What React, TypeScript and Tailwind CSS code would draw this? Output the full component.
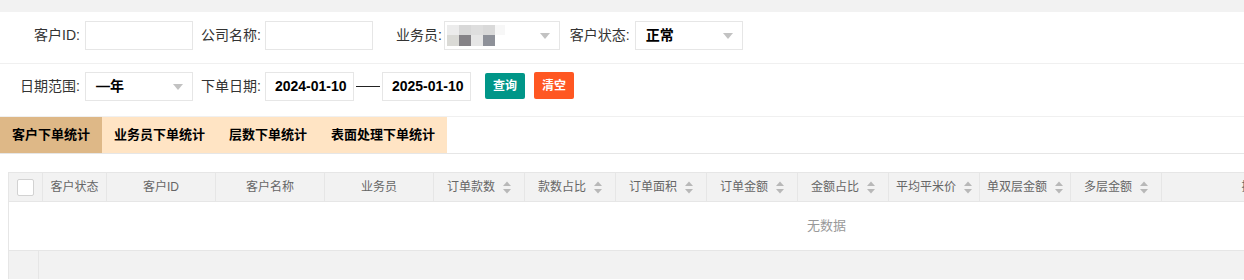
import React from "react"

interface Col {
  w: number
  title: string
  sort?: boolean
}

const columns: Col[] = [
  { w: 64, title: "客户状态" },
  { w: 109, title: "客户ID" },
  { w: 109, title: "客户名称" },
  { w: 109, title: "业务员" },
  { w: 91, title: "订单款数", sort: true },
  { w: 91, title: "款数占比", sort: true },
  { w: 91, title: "订单面积", sort: true },
  { w: 91, title: "订单金额", sort: true },
  { w: 91, title: "金额占比", sort: true },
  { w: 91, title: "平均平米价", sort: true },
  { w: 91, title: "单双层金额", sort: true },
  { w: 91, title: "多层金额", sort: true },
  { w: 184, title: "操作" },
]

const tabs = ["客户下单统计", "业务员下单统计", "层数下单统计", "表面处理下单统计"]

function Arrow() {
  return (
    <svg width="10" height="6" viewBox="0 0 10 6" className="shrink-0">
      <path d="M0 0 L10 0 L5 6 Z" fill="#c2c2c2" />
    </svg>
  )
}

function SortIcon() {
  return (
    <svg width="8" height="13" viewBox="0 0 8 13" className="ml-[8px] shrink-0">
      <path d="M0 5 L4 0.5 L8 5 Z" fill="#b8b8b8" />
      <path d="M0 8 L8 8 L4 12.5 Z" fill="#b8b8b8" />
    </svg>
  )
}

function Input({ w, value }: { w: number; value?: string }) {
  return (
    <div
      className="h-[29px] border border-[#e6e6e6] bg-white flex items-center pl-[9px] text-[14px] font-bold text-black"
      style={{ width: w }}
    >
      {value}
    </div>
  )
}

function Select({ w, value, blur }: { w: number; value?: string; blur?: boolean }) {
  return (
    <div
      className="h-[29px] border border-[#e6e6e6] bg-white flex items-center justify-between pl-[10px] pr-[9px]"
      style={{ width: w }}
    >
      {blur ? (
        <div className="-ml-[8px] grid grid-cols-[12px_12px_12px_12px_10px] grid-rows-[10px_11px]">
          <div className="bg-[#ececec]" />
          <div className="bg-[#d8d8d8]" />
          <div className="bg-[#dedede]" />
          <div className="bg-[#d9d9d9]" />
          <div className="bg-[#f7f7f7]" />
          <div className="bg-[#dadad6]" />
          <div className="bg-[#858387]" />
          <div className="bg-[#e6e6e6]" />
          <div className="bg-[#8e9199]" />
          <div />
        </div>
      ) : (
        <span className="text-[14px] font-bold text-black">{value}</span>
      )}
      <Arrow />
    </div>
  )
}

function Label({ children, className = "" }: { children: React.ReactNode; className?: string }) {
  return <span className={`text-[14px] text-[#333] whitespace-nowrap ${className}`}>{children}</span>
}

export default function App() {
  return (
    <div
      className="w-[1244px] h-[280px] overflow-hidden bg-white"
      style={{ fontFamily: '"Liberation Sans", "Noto Sans CJK SC", sans-serif' }}
    >
      <div className="h-[12px] bg-[#f2f2f2]" />

      {/* 第一行 */}
      <div className="h-[52px] border-b border-[#f0f0f0] flex items-start pt-[9px]">
        <Label className="w-[80px] text-right pt-[4px] mr-[5px]">客户ID:</Label>
        <Input w={108} />
        <Label className="ml-[8px] mr-[4px] pt-[4px]">公司名称:</Label>
        <Input w={108} />
        <Label className="ml-[23px] mr-[2px] pt-[4px]">业务员:</Label>
        <Select w={116} blur />
        <Label className="ml-[10px] mr-[5px] pt-[4px]">客户状态:</Label>
        <Select w={108} value="正常" />
      </div>

      {/* 第二行 */}
      <div className="h-[53px] border-b border-[#f0f0f0] flex items-start pt-[8px]">
        <Label className="w-[80px] text-right pt-[4px] mr-[5px]">日期范围:</Label>
        <Select w={108} value="—年" />
        <Label className="ml-[8px] mr-[4px] pt-[4px]">下单日期:</Label>
        <Input w={89} value="2024-01-10" />
        <div className="w-[24px] h-px bg-[#222] mx-[2px] mt-[14px]" />
        <Input w={89} value="2025-01-10" />
        <button className="ml-[14px] mt-[1px] w-[40px] h-[26px] bg-[#009688] text-white text-[12px] font-bold rounded-[2px]">
          查询
        </button>
        <button className="ml-[9px] w-[40px] h-[27px] bg-[#ff5722] text-white text-[12px] font-bold rounded-[2px]">
          清空
        </button>
      </div>

      {/* 标签页 */}
      <div className="flex h-[37px] border-b border-[#e6e6e6]">
        {tabs.map((t, i) => (
          <div
            key={t}
            className={`px-[12px] h-[36px] flex items-center text-[13px] font-bold text-black ${
              i === 0 ? "bg-[#deb887]" : "bg-[#ffe4c4]"
            }`}
          >
            {t}
          </div>
        ))}
      </div>

      {/* 表格 */}
      <div className="ml-[8px] mt-[18px] w-[1636px] border-t border-l border-[#e6e6e6]">
        <div className="flex h-[29px] bg-[#f2f2f2] border-b border-[#e6e6e6]">
          <div className="w-[34px] shrink-0 border-r border-[#e6e6e6] flex items-center justify-center">
            <div className="w-[17px] h-[17px] bg-white border border-[#d2d2d2] rounded-[2px]" />
          </div>
          {columns.map((c) => (
            <div
              key={c.title}
              className="shrink-0 border-r border-[#e6e6e6] flex items-center justify-center text-[12px] text-[#666]"
              style={{ width: c.w }}
            >
              <span className="whitespace-nowrap">{c.title}</span>
              {c.sort && <SortIcon />}
            </div>
          ))}
        </div>
        <div className="h-[49px] flex items-center justify-center text-[13px] text-[#999] border-b border-[#e6e6e6]">
          无数据
        </div>
        <div className="flex h-[28px] bg-[#f2f2f2]">
          <div className="w-[30px] border-r border-[#e6e6e6]" />
        </div>
      </div>
    </div>
  )
}
